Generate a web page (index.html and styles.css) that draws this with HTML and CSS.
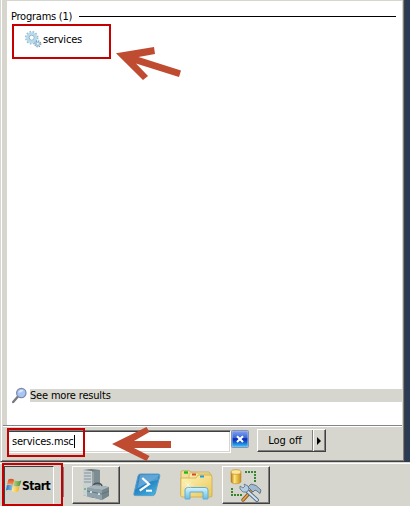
FILE: index.html
```
<!DOCTYPE html>
<html lang="en">
<head>
<meta charset="utf-8">
<title>Start menu</title>
<link rel="stylesheet" href="styles.css">
</head>
<body>
<div class="desktop">
  <main class="menu">
    <section class="results">
      <div class="heading"><span class="heading-text">Programs (1)</span><span class="rule"></span></div>
      <div class="program">
        <svg class="gear" width="17" height="17" viewBox="0 0 17 17">
          <circle cx="6.7" cy="6.7" r="5.9" fill="none" stroke="#9dbccd" stroke-width="1.8" stroke-dasharray="1.7 1.4"/>
          <circle cx="6.7" cy="6.7" r="4.2" fill="#d9edf7" stroke="#b5d9ee" stroke-width="2.6"/>
          <circle cx="6.7" cy="6.7" r="2.5" fill="#fff" stroke="#7ba5c4" stroke-width=".8"/>
          <circle cx="12.8" cy="12.8" r="2.8" fill="none" stroke="#7899ae" stroke-width="1.6" stroke-dasharray="1.2 1"/>
          <circle cx="12.8" cy="12.8" r="1.7" fill="#eef8fc" stroke="#9cc3da" stroke-width="1.3"/>
        </svg>
        <span class="program-name">services</span>
      </div>
      <div class="more">
        <svg class="lens" width="16" height="17" viewBox="0 0 16 17">
          <path d="M1.2 15 5.5 10" stroke="#777984" stroke-width="2.4" stroke-linecap="round"/>
          <circle cx="9.3" cy="6" r="4.7" fill="#a9c6ee" stroke="#7c86ac" stroke-width="1.2"/>
          <path d="M6.3 5.7C7 2.9 9.5 2 11.5 3.2 10 5 8.4 5.6 6.3 5.7Z" fill="#d9e9fc"/>
        </svg>
        <span class="more-label"><span class="more-text">See more results</span></span>
      </div>
    </section>
    <section class="controls">
      <div class="search"><span class="query">services.msc</span><span class="caret"></span></div>
      <div class="clear">
        <svg width="18" height="18" viewBox="0 0 18 18">
          <defs><linearGradient id="clearFill" x2="0" y2="1"><stop stop-color="#7d9cef"/><stop offset=".42" stop-color="#3866d9"/><stop offset=".48" stop-color="#0627b2"/><stop offset=".7" stop-color="#1758ce"/><stop offset="1" stop-color="#34c5f4"/></linearGradient></defs>
          <rect x=".5" y=".5" width="17" height="17" rx="1" fill="#9ebbe0" stroke="#8493b5"/>
          <rect x="1.5" y="1.5" width="15" height="15" fill="url(#clearFill)"/>
          <path d="M6 6.2 12 12M12 6.2 6 12" stroke="#fff" stroke-width="2"/>
        </svg>
      </div>
      <div class="logoff"><span class="logoff-label"><span class="logoff-text">Log off</span></span><span class="logoff-arrow"><svg width="5" height="8" viewBox="0 0 5 8"><path d="M0 0 4 4 0 8Z"/></svg></span></div>
    </section>
  </main>
  <footer class="taskbar">
    <div class="start">
      <svg width="16" height="15" viewBox="0 0 16 15">
        <defs>
          <linearGradient id="red" x2="0" y2="1"><stop stop-color="#de4826"/><stop offset="1" stop-color="#f5a05c"/></linearGradient>
          <linearGradient id="green"><stop stop-color="#b6d889"/><stop offset="1" stop-color="#478e2d"/></linearGradient>
          <linearGradient id="blue"><stop stop-color="#276cb1"/><stop offset="1" stop-color="#87c6ec"/></linearGradient>
          <linearGradient id="yellow"><stop stop-color="#fff0a0"/><stop offset="1" stop-color="#f3ad20"/></linearGradient>
        </defs>
        <path d="M2.3 1.5Q5.3-.1 8.2 1.8L6.9 7.2Q4 5.4 1 6.8Z" fill="url(#red)"/>
        <path d="M8.5 2.2Q11.5 4 15.4 2.4L13.8 7.8Q10.4 9.2 7.2 7.4Z" fill="url(#green)"/>
        <path d="M.9 7.3Q3.8 5.9 6.7 7.6L5.4 12.7Q2.4 11 0 12.5Z" fill="url(#blue)"/>
        <path d="M7.1 7.9Q10.2 9.5 13.6 8.2L12.2 13.5Q8.8 15 5.7 13Z" fill="url(#yellow)"/>
      </svg>
      <span class="start-text">Start</span>
    </div>
    <span class="grip"></span>
    <div class="task raised server">
      <svg width="30" height="34" viewBox="0 0 30 34">
        <path d="M2 2 10 1 19 2V27L11 30 2 27Z" fill="#6b7a80"/>
        <path d="M2 2 11 3V30L2 27Z" fill="#cad1d2"/>
        <path d="M11 3 19 2V27L11 30Z" fill="#7e8d92"/>
        <path d="M3 5H10M3 8H10M3 11H10M3 14H10" stroke="#84949a" stroke-width="1.1"/>
        <path d="M12 4V29" stroke="#a8b4b8"/>
        <path d="M4 20V22" stroke="#5fb44f" stroke-width="1.5"/>
        <path d="M12 19C12 14 21 14 21 19" fill="none" stroke="#4a5358" stroke-width="1.6"/>
        <path d="M6 20 13 17 28 19 28 28 21 32 6 28Z" fill="#74858e"/>
        <path d="M6 20 13 17 28 19 21 22Z" fill="#a9b7bd"/>
        <path d="M6 20 21 22V32L6 28Z" fill="#8fa2ac"/>
        <path d="M6 23 21 26 28 23" fill="none" stroke="#5c6d76" stroke-width=".8"/>
        <path d="M10 23V25M18 25V27" stroke="#eef3f3" stroke-width="1.5"/>
      </svg>
    </div>
    <div class="task shell">
      <svg width="28" height="24" viewBox="0 0 28 24">
        <defs><linearGradient id="shellFill" x1="0" y1="0" x2=".7" y2="1"><stop stop-color="#2c75b6"/><stop offset=".5" stop-color="#3b92cd"/><stop offset=".53" stop-color="#2381bf"/><stop offset="1" stop-color="#42b0df"/></linearGradient></defs>
        <path d="M7.2 1H25.4Q27.2 1 26.8 3L22.2 20.5Q21.7 22.6 19.6 22.6H2Q.4 22.6 .9 20.5L5 3Q5.5 1 7.2 1Z" fill="url(#shellFill)" stroke="#5b9eca"/>
        <path d="M7 2H25.7L24.5 7Q16 8 5 15Z" fill="#91c4e5" opacity=".45"/>
        <path d="M9.3 5 16 11.2 6.7 17.6" fill="none" stroke="#fff" stroke-width="2.2"/>
        <path d="M13 17.7H19" stroke="#fff" stroke-width="2"/>
      </svg>
    </div>
    <div class="task folder">
      <svg width="33" height="30" viewBox="0 0 33 30">
        <defs><linearGradient id="folderFill" x2="1" y2="1"><stop stop-color="#fff5b8"/><stop offset="1" stop-color="#e8c75b"/></linearGradient><linearGradient id="standFill" x2="0" y2="1"><stop stop-color="#d5f4ff"/><stop offset="1" stop-color="#69bde5"/></linearGradient></defs>
        <path d="M1 2Q1 .7 2.5.7H9L11 2H29L31 5V25H1Z" fill="#f2df99" stroke="#c5a64e" stroke-width=".8"/>
        <path d="M4 2.5H8" stroke="#1fb91c" stroke-width="2.4"/>
        <path d="M9 5Q9 2.8 11 2.8H17L19 4H31V26H9Z" fill="#f8e8a7" stroke="#d0b35d" stroke-width=".8"/>
        <path d="M12 4.5H16" stroke="#d94822" stroke-width="2"/>
        <path d="M1 8H16L18 5H30Q32 5 32 7V26Q32 27 30.5 27H2Q.7 27 .7 25Z" fill="url(#folderFill)" stroke="#cfaa46" stroke-width=".8"/>
        <path d="M20 6.5H24" stroke="#239bdd" stroke-width="2"/>
        <path d="M5 29V20Q5 17.5 8 17.5H25Q28 17.5 28 20V29H23V22H10V29Z" fill="url(#standFill)" stroke="#62aed2"/>
        <path d="M8 11V19M3 15H13M5 12 11 18M11 12 5 18" stroke="#fff" stroke-width=".8" opacity=".55"/>
      </svg>
    </div>
    <div class="task raised tools">
      <svg width="33" height="33" viewBox="0 0 33 33">
        <defs><linearGradient id="gold"><stop stop-color="#b77912"/><stop offset=".35" stop-color="#ffe477"/><stop offset="1" stop-color="#c78b16"/></linearGradient></defs>
        <path d="M1 3.2V12.5C1 15.5 11 15.5 11 12.5V3.2Z" fill="url(#gold)" stroke="#b58222" stroke-width=".5"/>
        <ellipse cx="6" cy="3" rx="5" ry="2.3" fill="#ffe69a" stroke="#c69125" stroke-width=".7"/>
        <path d="M15 3H25V13" fill="none" stroke="#36852f" stroke-width="2" stroke-dasharray="2 1"/>
        <path d="M2 19V26H12" fill="none" stroke="#36852f" stroke-width="2" stroke-dasharray="2 1"/>
        <path d="M23 20 13 31" stroke="#8c5a20" stroke-width="3.4" stroke-linecap="round"/>
        <path d="M22 21 13 31" stroke="#e0a94c" stroke-width="1.7" stroke-linecap="round"/>
        <path d="M18 18 21 15 26 16.5 31 21 30 24.5 27 22 25 21 23 23Z" fill="#a2b9cf" stroke="#4e6579" stroke-width=".8"/>
        <path d="M16 21 27 31" stroke="#526d85" stroke-width="3.8" stroke-linecap="round"/>
        <path d="M16 21 27 31" stroke="#d2e3f2" stroke-width="2" stroke-linecap="round"/>
        <path d="M10 17 13 19 15 17 14 15 18 17 19 20 17 23 13 23 10 20Z" fill="#b5cce1" stroke="#58738c" stroke-width=".8"/>
      </svg>
    </div>
  </footer>
</div>
<div class="mark mark-program"></div>
<div class="mark mark-search"></div>
<div class="mark mark-start"></div>
<svg class="arrow arrow-program" width="66" height="34" viewBox="0 0 66 34"><path d="M0 7.3 38 1 39 8 22.5 11 65 24.5 63 31 20 17.5 32 30 27 34Z" fill="#bf4b31"/></svg>
<svg class="arrow arrow-search" width="60" height="34" viewBox="0 0 60 34"><path d="M0 17 34.5 0 37.5 5 22 14H59V21H22L37.5 29 34.5 34Z" fill="#bf4b31"/></svg>
</body>
</html>
```
FILE: styles.css
```
* { box-sizing: border-box; }
body {
  margin: 0;
  width: 410px;
  height: 506px;
  overflow: hidden;
  background: #2b3a55;
  color: #000;
  font: 11px/14px "DejaVu Sans Condensed", "DejaVu Sans", sans-serif;
}
svg { display: block; flex: none; }
.desktop { display: flex; flex-direction: column; height: 506px; }
.menu {
  width: 405px;
  height: 462px;
  display: flex;
  flex-direction: column;
  padding: 1px 2px 0 3px;
  background: #d6d6ce;
  border-left: 1px solid #d6d6ce;
  border-right: 1px solid #404040;
  border-bottom: 1px solid #404040;
  box-shadow: inset 1px 0 #fff, inset -1px -1px #808080;
}
.results {
  height: 424px;
  margin-left: 3px;
  background: #fff;
  display: flex;
  flex-direction: column;
}
.heading { display: flex; align-items: center; height: 15px; margin: 8px 6px 0 4px; }
.heading-text { width: 68px; white-space: nowrap; letter-spacing: -.24px; }
.rule { flex: 1; height: 1px; background: #000; }
.program { display: flex; align-items: center; height: 18px; margin: 6px 0 0 18px; gap: 1px; }
.program-name { padding-top: 1px; letter-spacing: -.2px; }
.more { display: flex; align-items: center; height: 17px; margin: 339px 0 0 5px; gap: 2px; }
.more-label { display: flex; align-items: center; flex: 1; height: 13px; background: #d6d6ce; }
.more-text { padding-top: 1px; letter-spacing: -.18px; }
.controls {
  display: flex;
  height: 35px;
  padding-top: 4px;
  margin-left: -1px;
  border-top: 1px solid #84848c;
  box-shadow: inset 0 1px #fff;
}
.search {
  display: flex;
  align-items: center;
  width: 224px;
  height: 23px;
  margin-left: 4px;
  padding-left: 4px;
  background: #fff;
  border: 1px solid #808080;
  border-right-color: #fff;
  border-bottom-color: #fff;
  box-shadow: inset 1px 1px #404040, inset -1px -1px #d6d6ce;
}
.query { letter-spacing: -.2px; }
.caret { width: 1px; height: 13px; background: #000; }
.clear { margin: 0; }
.logoff {
  display: flex;
  width: 69px;
  height: 23px;
  margin: -1px 0 0 8px;
  border: 1px solid #fff;
  border-right-color: #404040;
  border-bottom-color: #404040;
  box-shadow: inset -1px -1px #808080;
}
.logoff-label { width: 55px; display: flex; align-items: center; justify-content: center; border-right: 1px solid #808080; }
.logoff-arrow { flex: 1; display: flex; align-items: center; justify-content: center; border-left: 1px solid #fff; }
.taskbar {
  display: flex;
  height: 44px;
  background: #d6d6ce;
  box-shadow: inset 0 1px #d6d6ce, inset 0 2px #fff;
}
.start {
  display: flex;
  align-items: center;
  width: 50px;
  height: 39px;
  margin: 4px 0 0 4px;
  padding-left: 1px;
  border-top: 1px solid #404040;
  border-left: 1px solid #404040;
  border-right: 1px solid #fff;
  border-bottom: 1px solid #fff;
  background: #d2d2ca;
}
.start-text { font: bold 12px/14px "DejaVu Sans Condensed", sans-serif; letter-spacing: -.5px; }
.grip { width: 1px; height: 30px; margin: 5px 8px 0 9px; background: #808080; }
.task { display: flex; align-items: center; justify-content: center; height: 38px; margin-top: 4px; }
.raised {
  width: 48px;
  border: 1px solid #fff;
  border-right-color: #404040;
  border-bottom-color: #404040;
  box-shadow: inset -1px -1px #808080;
}
.server svg { margin-left: 0; }
.shell { width: 28px; margin-left: 13px; }
.folder { width: 33px; margin-left: 19px; }
.tools { margin-left: 9px; }
.mark { position: absolute; border: 2px solid #c60000; }
.mark-program { left: 12px; top: 24px; width: 99px; height: 35px; }
.mark-search { left: 7px; top: 428px; width: 78px; height: 29px; }
.mark-start { left: 2px; top: 463px; width: 61px; height: 43px; }
.arrow { position: absolute; }
.arrow-program { left: 116px; top: 46px; }
.arrow-search { left: 112px; top: 427px; }
```
